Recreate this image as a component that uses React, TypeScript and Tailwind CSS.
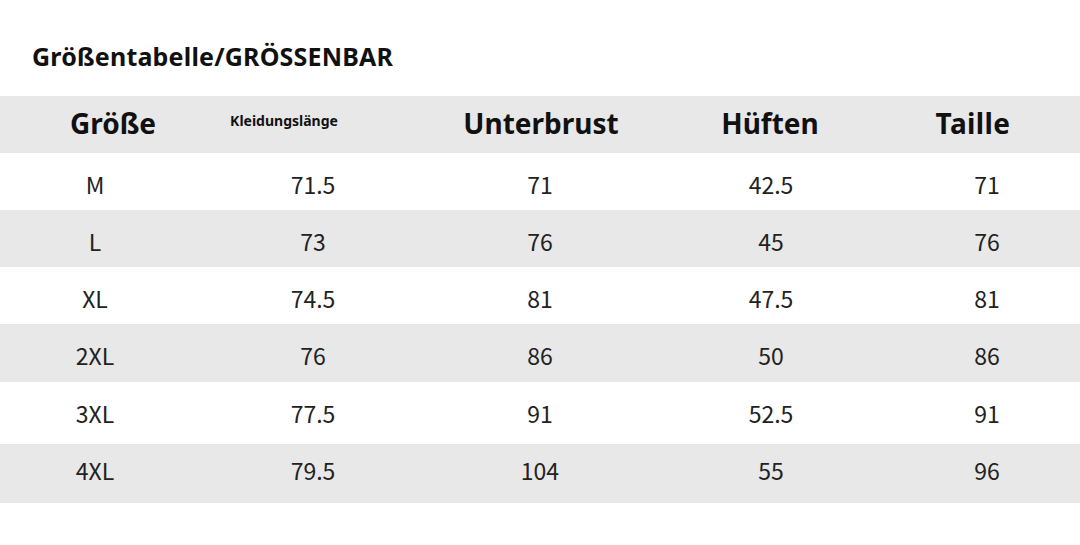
import React from "react";

const rows = [
  ["M", "71.5", "71", "42.5", "71"],
  ["L", "73", "76", "45", "76"],
  ["XL", "74.5", "81", "47.5", "81"],
  ["2XL", "76", "86", "50", "86"],
  ["3XL", "77.5", "91", "52.5", "91"],
  ["4XL", "79.5", "104", "55", "96"],
];

const heights = ["h-[57px]", "h-[57px]", "h-[57px]", "h-[58px]", "h-[62px]", "h-[59px]"];
const pads = ["pt-[6px]", "pt-[6px]", "pt-[6px]", "pt-[5px]", "pt-[0px]", "pb-[7px]"];

export default function App() {
  return (
    <div className="w-[1080px] h-[545px] bg-white overflow-hidden" style={{ fontFamily: '"Noto Sans", "Noto Sans CJK SC", sans-serif' }}>
      <div className="h-[96px] pl-[32px] pt-[38px]">
        <h1 className="text-[25px] leading-[36px] font-bold tracking-[0.2px] text-[#111]">Größentabelle/GRÖSSENBAR</h1>
      </div>
      <div className="grid grid-cols-[190px_246px_208px_254px_178px] h-[57px] items-center bg-[#e8e8e8] text-[#111] font-bold">
        <div className="text-center pl-[36px] pb-[3px] text-[28px]">Größe</div>
        <div className="text-center pr-[58px] pb-[8px] text-[14px]">Kleidungslänge</div>
        <div className="text-center pl-[2px] pb-[3px] text-[28px]">Unterbrust</div>
        <div className="text-center pr-[2px] pb-[3px] text-[28px]">Hüften</div>
        <div className="text-center pr-[28px] pb-[3px] text-[28px] tracking-[0.4px]">Taille</div>
      </div>
      {rows.map((r, i) => (
        <div
          key={r[0]}
          className={`grid grid-cols-[190px_246px_208px_254px_178px] items-center text-[23px] text-[#222] ${heights[i]} ${i % 2 === 1 ? "bg-[#e8e8e8]" : "bg-white"}`}
          style={{ fontFamily: '"Noto Sans CJK SC", "Noto Sans", sans-serif' }}
        >
          {r.map((c, j) => (
            <div key={j} className={`text-center ${pads[i]}`}>{c}</div>
          ))}
        </div>
      ))}
    </div>
  );
}
